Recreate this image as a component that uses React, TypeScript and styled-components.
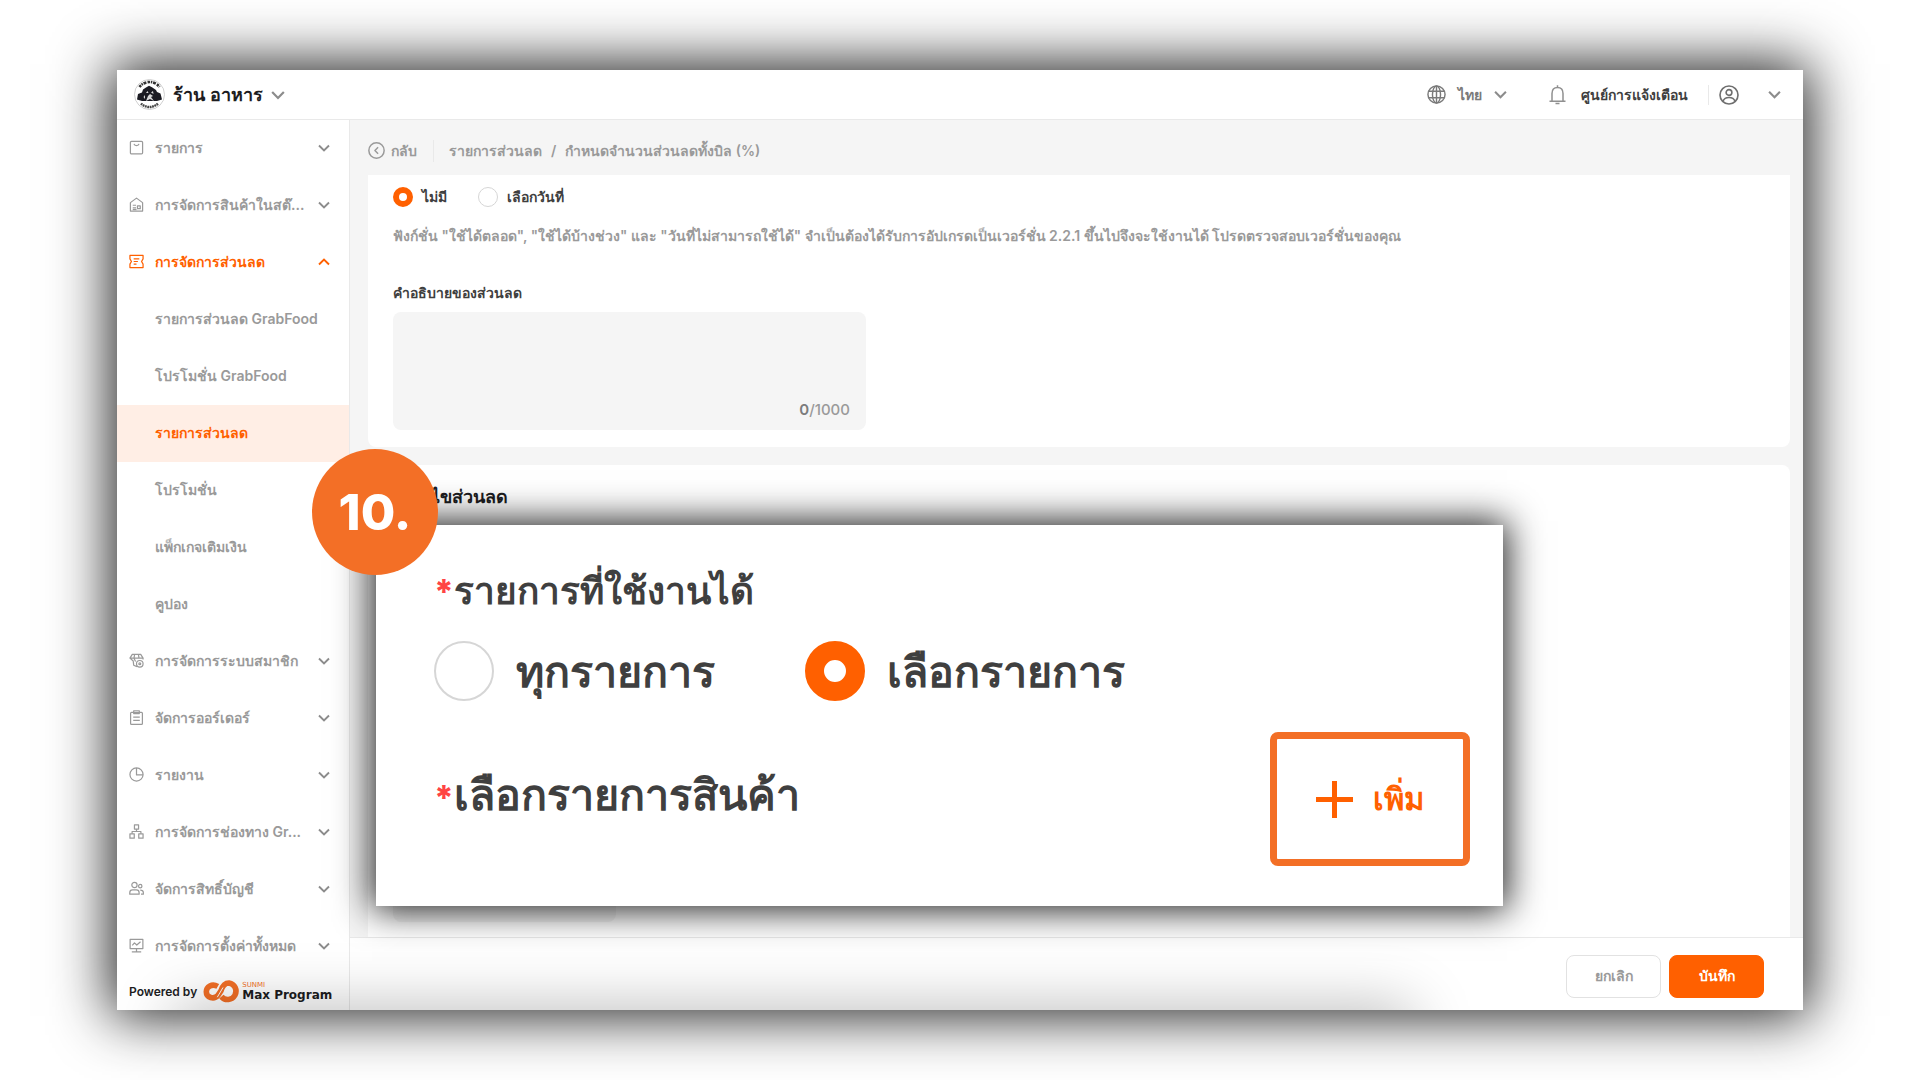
import React from "react";
import styled, { createGlobalStyle, css } from "styled-components";

const color = {
  brand: "#ff6000",
  badge: "#f36f26",
  ink: "#1d1d1f",
  text: "#3f3f3f",
  muted: "#9a9a9a",
  line: "#e9e9e9",
  panel: "#f5f5f5",
  active: "#ffeee5",
  required: "#ff4444",
};

const GlobalStyle = createGlobalStyle`
  *, *::before, *::after { box-sizing: border-box; }
  body { margin: 0; background: #fff; }
  body, button, input, textarea, select {
    font-family: Inter, "Noto Sans", sans-serif;
    font-size: 14px;
    font-weight: 600;
  }
  h2, p, ul { margin: 0; padding: 0; }
  button { border: 0; background: none; padding: 0; color: inherit; cursor: pointer; }
  svg { display: block; flex: none; }
`;

const Stage = styled.div`
  min-height: 100vh;
  padding: 70px 117px;
  display: flex;
`;

const Window = styled.div`
  position: relative;
  flex: 1;
  min-width: 0;
  display: flex;
  flex-direction: column;
  background: #fff;
  box-shadow: 0 0 54px 6px rgba(0, 0, 0, 0.88);
`;

const BottomShade = styled.div`
  position: absolute;
  inset: 0;
  overflow: hidden;
  pointer-events: none;

  &::after {
    content: "";
    position: absolute;
    top: 100%;
    left: 60px;
    width: 73%;
    height: 60px;
    box-shadow: 0 0 60px 4px rgba(0, 0, 0, 0.26);
  }
`;

const Header = styled.header`
  display: flex;
  align-items: center;
  height: 50px;
  padding: 0 22px 0 17px;
  border-bottom: 1px solid ${color.line};
`;

const StoreButton = styled.button`
  display: flex;
  align-items: center;
  gap: 8px;
  margin-right: auto;
  color: ${color.ink};
  font-size: 18px;
`;

const HeaderButton = styled.button<{ $gap: number; $dark?: boolean }>`
  display: flex;
  align-items: center;
  gap: ${(p) => p.$gap}px;
  color: ${(p) => (p.$dark ? color.text : "#7a7a7a")};
  & + & { margin-left: 42px; }
`;

const AccountButton = styled.button`
  display: flex;
  align-items: center;
  gap: 29px;
  margin-left: 20px;
  padding-left: 10px;
  border-left: 1px solid ${color.line};
  color: #6f6f6f;
`;

const Body = styled.div`
  flex: 1;
  display: flex;
  min-height: 0;
`;

const Sidebar = styled.nav`
  display: flex;
  flex-direction: column;
  width: 233px;
  flex: none;
  border-right: 1px solid ${color.line};
`;

const MenuList = styled.ul`
  list-style: none;
`;

const itemBase = css`
  display: flex;
  align-items: center;
  width: 100%;
  height: 57px;
  text-align: left;
  text-decoration: none;
  white-space: nowrap;
`;

const MenuButton = styled.button<{ $open?: boolean }>`
  ${itemBase}
  gap: 11px;
  padding: 0 19px 2px 12px;
  color: ${(p) => (p.$open ? color.brand : color.muted)};
`;

const MenuLabel = styled.span`
  flex: 1;
  line-height: 28px;
`;

const SubLink = styled.a<{ $active?: boolean }>`
  ${itemBase}
  padding: 0 0 2px 38px;
  color: ${(p) => (p.$active ? color.brand : color.muted)};
  background: ${(p) => (p.$active ? color.active : "transparent")};
`;

const PoweredBy = styled.div`
  display: flex;
  align-items: center;
  flex: 1;
  gap: 6px;
  padding: 0 0 3px 12px;
  color: ${color.ink};
  font-size: 12px;
`;

const Brand = styled.span`
  display: flex;
  align-items: center;
  gap: 1px;
`;

const BrandText = styled.span`
  display: flex;
  flex-direction: column;
  font-family: "DejaVu Sans", sans-serif;
  font-size: 12px;
  line-height: 12px;
  font-weight: 700;
`;

const BrandSmall = styled.span`
  color: ${color.badge};
  font-size: 7px;
  line-height: 8px;
  font-weight: 400;
`;

const Main = styled.main`
  flex: 1;
  min-width: 0;
  display: flex;
  flex-direction: column;
`;

const Scroller = styled.div`
  flex: 1;
  display: flex;
  flex-direction: column;
  padding: 0 13px 0 18px;
  background: ${color.panel};
`;

const Breadcrumb = styled.div`
  display: flex;
  align-items: center;
  height: 55px;
  padding-top: 6px;
  color: ${color.muted};
`;

const BackButton = styled.button`
  display: flex;
  align-items: center;
  gap: 6px;
  padding-right: 16px;
  border-right: 1px solid ${color.line};
`;

const Crumb = styled.a`
  margin-left: 15px;
  color: inherit;
  text-decoration: none;
`;

const CrumbCurrent = styled.span`
  margin-left: 9px;
`;

const Card = styled.section<{ $part: "top" | "bottom" }>`
  padding: 0 25px;
  background: #fff;
  ${(p) =>
    p.$part === "top"
      ? css`
          padding-top: 10px;
          padding-bottom: 17px;
          border-radius: 0 0 8px 8px;
        `
      : css`
          flex: 1;
          display: flex;
          flex-direction: column;
          margin-top: 18px;
          padding-top: 18px;
          padding-bottom: 15px;
          border-radius: 8px 8px 0 0;
        `}
`;

const RadioRow = styled.div<{ $large?: boolean }>`
  display: flex;
  align-items: center;
  gap: ${(p) => (p.$large ? 90 : 31)}px;
  margin-top: ${(p) => (p.$large ? 19 : 0)}px;
`;

const RadioLabel = styled.label<{ $large?: boolean }>`
  display: flex;
  align-items: center;
  gap: ${(p) => (p.$large ? 22 : 9)}px;
  font-size: ${(p) => (p.$large ? 43 : 14)}px;
  line-height: ${(p) => (p.$large ? 60 : 24)}px;
  color: ${color.text};
`;

const RadioInput = styled.input<{ $large?: boolean }>`
  appearance: none;
  flex: none;
  width: ${(p) => (p.$large ? 60 : 20)}px;
  height: ${(p) => (p.$large ? 60 : 20)}px;
  margin: 0;
  border: ${(p) => (p.$large ? 2 : 1)}px solid #d6d6d6;
  border-radius: 50%;
  background: #fff;
  &:checked {
    border: ${(p) => (p.$large ? 19 : 6)}px solid ${color.brand};
  }
`;

const Hint = styled.p`
  margin-top: 13px;
  line-height: 28px;
  color: ${color.muted};
`;

const FieldLabel = styled.label`
  display: block;
  margin-top: 28px;
  line-height: 30px;
  color: ${color.text};
`;

const TextBox = styled.div`
  display: flex;
  flex-direction: column;
  width: 473px;
  height: 118px;
  margin-top: 4px;
  padding: 8px 16px;
  border-radius: 8px;
  background: ${color.panel};
`;

const TextArea = styled.textarea`
  flex: 1;
  border: 0;
  outline: 0;
  resize: none;
  background: transparent;
`;

const Counter = styled.span`
  align-self: flex-end;
  font-size: 15px;
  font-weight: 500;
  line-height: 24px;
  color: ${color.muted};
  b { font-weight: 600; color: #7c7c7c; }
`;

const CardTitle = styled.h2`
  font-size: 18px;
  font-weight: 600;
  line-height: 28px;
  color: ${color.ink};
`;

const LimitSelect = styled.select`
  appearance: none;
  width: 223px;
  height: 40px;
  margin-top: auto;
  padding: 0 16px;
  border: 0;
  border-radius: 8px;
  background: ${color.panel};
  color: ${color.muted};
`;

const ActionBar = styled.footer`
  display: flex;
  align-items: center;
  justify-content: flex-end;
  gap: 8px;
  height: 73px;
  padding: 4px 39px 0 0;
  border-top: 1px solid ${color.line};
`;

const ActionButton = styled.button<{ $primary?: boolean }>`
  width: 95px;
  height: 43px;
  border-radius: 8px;
  border: 1px solid ${(p) => (p.$primary ? color.brand : "#e2e2e2")};
  background: ${(p) => (p.$primary ? color.brand : "#fff")};
  color: ${(p) => (p.$primary ? "#fff" : color.muted)};
`;

const Callout = styled.section`
  position: absolute;
  top: 455px;
  left: 259px;
  right: 300px;
  height: 381px;
  padding: 36px 33px 0 58px;
  background: #fff;
  box-shadow: 0 0 34px 4px rgba(0, 0, 0, 0.88);
`;

const StepBadge = styled.div`
  position: absolute;
  top: -76px;
  left: -64px;
  display: flex;
  align-items: center;
  justify-content: center;
  width: 126px;
  height: 126px;
  border-radius: 50%;
  background: ${color.badge};
  color: #fff;
  font-size: 50px;
  font-weight: 800;
`;

const CalloutLabel = styled.h2<{ $large?: boolean }>`
  padding-bottom: ${(p) => (p.$large ? 6 : 0)}px;
  font-size: ${(p) => (p.$large ? 43 : 37)}px;
  font-weight: 600;
  line-height: 60px;
  color: ${color.text};
`;

const Required = styled.span`
  color: ${color.required};
  font-size: 34px;
  font-weight: 800;
`;

const CalloutRow = styled.div`
  display: flex;
  justify-content: space-between;
  align-items: center;
  margin-top: 31px;
`;

const AddButton = styled.button`
  display: flex;
  align-items: center;
  justify-content: center;
  gap: 20px;
  width: 200px;
  height: 134px;
  border: 7px solid ${color.badge};
  border-radius: 8px;
  color: ${color.brand};
  font-size: 31px;
`;

const Chevron = ({ size = 12, up = false, tint = "#8c8c8c" }: { size?: number; up?: boolean; tint?: string }) => (
  <svg width={size} height={size} viewBox="0 0 12 12" fill="none" stroke={tint} strokeWidth="1.900">
    <path d={up ? "M1 8.5 6 3.5l5 5" : "M1 3.5l5 5 5-5"} />
  </svg>
);

const Icon = ({ children, size = 15, sw = 1.3 }: { children: React.ReactNode; size?: number; sw?: number }) => (
  <svg width={size} height={size} viewBox="0 0 16 16" fill="none" stroke="currentColor" strokeWidth={sw} strokeLinejoin="round">
    {children}
  </svg>
);

const icons: Record<string, React.ReactNode> = {
  list: <><rect x="1.5" y="1.5" width="13" height="13.4" rx="1.2" /><path d="M5.3 4.2c.6 2.4 4.8 2.4 5.400 0" /></>,
  stock: <><path d="M1.500 15V6L8 1.200 14.500 6v9z" /><path d="M4 8.800h3.500M4 11.600h3.500M9 9.500h3v3H9zM4 13.500h4" /></>,
  ticket: <><path d="M1 1.500h14v3.700L13.400 8l1.600 2.800v3.700H1v-3.700L2.600 8 1 5.200z" /><path d="M5 5.300h6M5 8h4.500M5 10.700h3" /></>,
  member: <><path d="M8.500 14.500 5 13 4.500 8.500 1 5.500 3.500 1.500h9L15 5.500v1.300M1 5.500h14M6 1.500 5.300 5.500 7 9M10 1.500l.7 4" /><circle cx="11.500" cy="11.500" r="3.500" /><circle cx="11.500" cy="11.500" r="1" /></>,
  order: <><rect x="1.700" y="2.500" width="12.600" height="12.800" rx="1" /><path d="M5 .8h6v3H5zM4.500 7.500h7M4.500 11h7" /></>,
  report: <><circle cx="8" cy="8" r="7" /><path d="M8 1v7.500h7" /></>,
  channel: <><rect x="5.800" y="1" width="4.400" height="4.400" /><rect x="1" y="10.500" width="4.600" height="4.600" /><rect x="10.400" y="10.500" width="4.600" height="4.600" /><path d="M8 5.400V8M3.300 10.500V8h9.400v2.500" /></>,
  account: <><circle cx="5.800" cy="4.300" r="2.800" /><circle cx="12" cy="5.500" r="1.800" /><path d="M.8 14v-1.500c0-2 1.500-3 3-3h4c1.500 0 3 1 3 3V14zM12 9.800c2 0 3.300 1 3.300 2.500V14h-2.500" /></>,
  settings: <><path d="M1.200 1.500h13.600v9.800H1.200zM8 11.300v3.200M3 14.800h10M3.500 7.800l2.300-2.600 2.500 2.300 4-3.500" /></>,
};

const StoreLogo = () => (
  <svg width="31" height="31" viewBox="0 0 31 31">
    <circle cx="15.500" cy="15.500" r="15" fill="#fff" stroke="#c4c4c4" strokeWidth=".8" />
    <path d="M5.500 8a12.500 12.500 0 0 1 20 0" fill="none" stroke="#333" strokeWidth="2.600" strokeDasharray="2.400 .8 1.400 .8 3 1.200" />
    <path d="M7 24.500a12 12 0 0 0 17 0" fill="none" stroke="#444" strokeWidth="2.400" strokeDasharray="1.800 .6" />
    <path d="M3 20.500 4 15l4-1.500 1-3 3-2 3-1.800 3 1.600 4 2.700 1 2 3.500 1.500 1.500 6-5 1.500H8z" fill="#1b1b22" />
    <path d="M12 14l1.500-2 1 2zM17 13.500l2-1.500.5 3zM14 17l2-2 3 2-2 1 3 4-4-2-4 2zM9.500 18l1.500-2v4z" fill="#d9d9d9" />
  </svg>
);

const BrandLogo = () => (
  <svg width="38" height="23" viewBox="0 0 38 23" fill="none" stroke={color.badge} strokeWidth="5.600">
    <path d="M14.800 6.400C9 3.200 3.300 6.500 3.300 11.800c0 6 7.700 8 11.700 3.600l3-4.600c1.500-5 4-7.800 8-7.800a8.300 8.300 0 1 1-7.600 13.600" />
    <path d="M14.300 17.200 20 7.500" stroke="#fff" strokeWidth="1" />
  </svg>
);

const Globe = () => (
  <Icon size={19} sw={1.2}>
    <circle cx="8" cy="8" r="7.200" /><ellipse cx="8" cy="8" rx="3.400" ry="7.200" /><path d="M8 .8v14.400M1.500 5.200h13M1.500 10.800h13" />
  </Icon>
);
const Bell = () => (
  <svg width="17" height="20" viewBox="0 0 17 20" fill="none" stroke="#909090" strokeWidth="1.500">
    <path d="M8.500.3v2M3 16V8.500C3 4.800 5.300 2.600 8.500 2.600S14 4.800 14 8.500V16M.5 16.200h16M6.500 18.600h4" />
  </svg>
);
const User = () => (
  <Icon size={20} sw={1.3}>
    <circle cx="8" cy="8" r="7.200" /><circle cx="8" cy="6" r="2.300" /><path d="M3.200 13c.8-2.200 2.500-3 4.800-3s4 .8 4.800 3" />
  </Icon>
);
const Back = () => (
  <Icon size={17} sw={1.4}><circle cx="8" cy="8" r="7.200" /><path d="M9.500 5 6.500 8l3 3" /></Icon>
);

type Item = { icon: string; label: string; children?: { label: string; active?: boolean }[] };
const menu: Item[] = [
  { icon: "list", label: "รายการ" },
  { icon: "stock", label: "การจัดการสินค้าในสต๊..." },
  {
    icon: "ticket",
    label: "การจัดการส่วนลด",
    children: [
      { label: "รายการส่วนลด GrabFood" },
      { label: "โปรโมชั่น GrabFood" },
      { label: "รายการส่วนลด", active: true },
      { label: "โปรโมชั่น" },
      { label: "แพ็กเกจเติมเงิน" },
      { label: "คูปอง" },
    ],
  },
  { icon: "member", label: "การจัดการระบบสมาชิก" },
  { icon: "order", label: "จัดการออร์เดอร์" },
  { icon: "report", label: "รายงาน" },
  { icon: "channel", label: "การจัดการช่องทาง Gr..." },
  { icon: "account", label: "จัดการสิทธิ์บัญชี" },
  { icon: "settings", label: "การจัดการตั้งค่าทั้งหมด" },
];

const Radio = ({ name, label, large, checked }: { name: string; label: string; large?: boolean; checked?: boolean }) => (
  <RadioLabel $large={large}>
    <RadioInput type="radio" name={name} defaultChecked={checked} $large={large} />
    {label}
  </RadioLabel>
);

export default function App() {
  return (
    <>
      <GlobalStyle />
      <Stage>
        <Window>
          <Header>
            <StoreButton><StoreLogo />ร้าน อาหาร<Chevron size={14} /></StoreButton>
            <HeaderButton $gap={12}><Globe />ไทย<Chevron size={13} /></HeaderButton>
            <HeaderButton $gap={15} $dark><Bell />ศูนย์การแจ้งเตือน</HeaderButton>
            <AccountButton aria-label="บัญชี"><User /><Chevron size={13} /></AccountButton>
          </Header>
          <Body>
            <Sidebar>
              <MenuList>
                {menu.map((m) => (
                  <li key={m.label}>
                    <MenuButton $open={!!m.children}>
                      <Icon>{icons[m.icon]}</Icon>
                      <MenuLabel>{m.label}</MenuLabel>
                      <Chevron up={!!m.children} tint={m.children ? color.brand : undefined} />
                    </MenuButton>
                    {m.children && (
                      <MenuList>
                        {m.children.map((c) => (
                          <li key={c.label}><SubLink href="#" $active={c.active}>{c.label}</SubLink></li>
                        ))}
                      </MenuList>
                    )}
                  </li>
                ))}
              </MenuList>
              <PoweredBy>
                Powered by
                <Brand>
                  <BrandLogo />
                  <BrandText><BrandSmall>SUNMI</BrandSmall>Max Program</BrandText>
                </Brand>
              </PoweredBy>
            </Sidebar>
            <Main>
              <Scroller>
                <Breadcrumb>
                  <BackButton><Back />กลับ</BackButton>
                  <Crumb href="#">รายการส่วนลด</Crumb>
                  <CrumbCurrent>/</CrumbCurrent>
                  <CrumbCurrent>กำหนดจำนวนส่วนลดทั้งบิล (%)</CrumbCurrent>
                </Breadcrumb>
                <Card $part="top">
                  <RadioRow>
                    <Radio name="blocked" label="ไม่มี" checked />
                    <Radio name="blocked" label="เลือกวันที่" />
                  </RadioRow>
                  <Hint>
                    ฟังก์ชั่น "ใช้ได้ตลอด", "ใช้ได้บ้างช่วง" และ "วันที่ไม่สามารถใช้ได้" จำเป็นต้องได้รับการอัปเกรดเป็นเวอร์ชั่น 2.2.1 ขึ้นไปจึงจะใช้งานได้ โปรดตรวจสอบเวอร์ชั่นของคุณ
                  </Hint>
                  <FieldLabel htmlFor="description">คำอธิบายของส่วนลด</FieldLabel>
                  <TextBox>
                    <TextArea id="description" />
                    <Counter><b>0</b>/1000</Counter>
                  </TextBox>
                </Card>
                <Card $part="bottom">
                  <CardTitle>เงื่อนไขส่วนลด</CardTitle>
                  <LimitSelect aria-label="เงื่อนไขส่วนลด" />
                </Card>
              </Scroller>
              <ActionBar>
                <ActionButton>ยกเลิก</ActionButton>
                <ActionButton $primary>บันทึก</ActionButton>
              </ActionBar>
            </Main>
          </Body>
          <BottomShade />
          <Callout>
            <CalloutLabel><Required>*</Required>รายการที่ใช้งานได้</CalloutLabel>
            <RadioRow $large>
              <Radio name="items" label="ทุกรายการ" large />
              <Radio name="items" label="เลือกรายการ" large checked />
            </RadioRow>
            <CalloutRow>
              <CalloutLabel $large><Required>*</Required>เลือกรายการสินค้า</CalloutLabel>
              <AddButton>
                <svg width="37" height="37" viewBox="0 0 37 37" stroke="currentColor" strokeWidth="5"><path d="M18.500 0v37M0 18.500h37" /></svg>
                เพิ่ม
              </AddButton>
            </CalloutRow>
            <StepBadge>10.</StepBadge>
          </Callout>
        </Window>
      </Stage>
    </>
  );
}
